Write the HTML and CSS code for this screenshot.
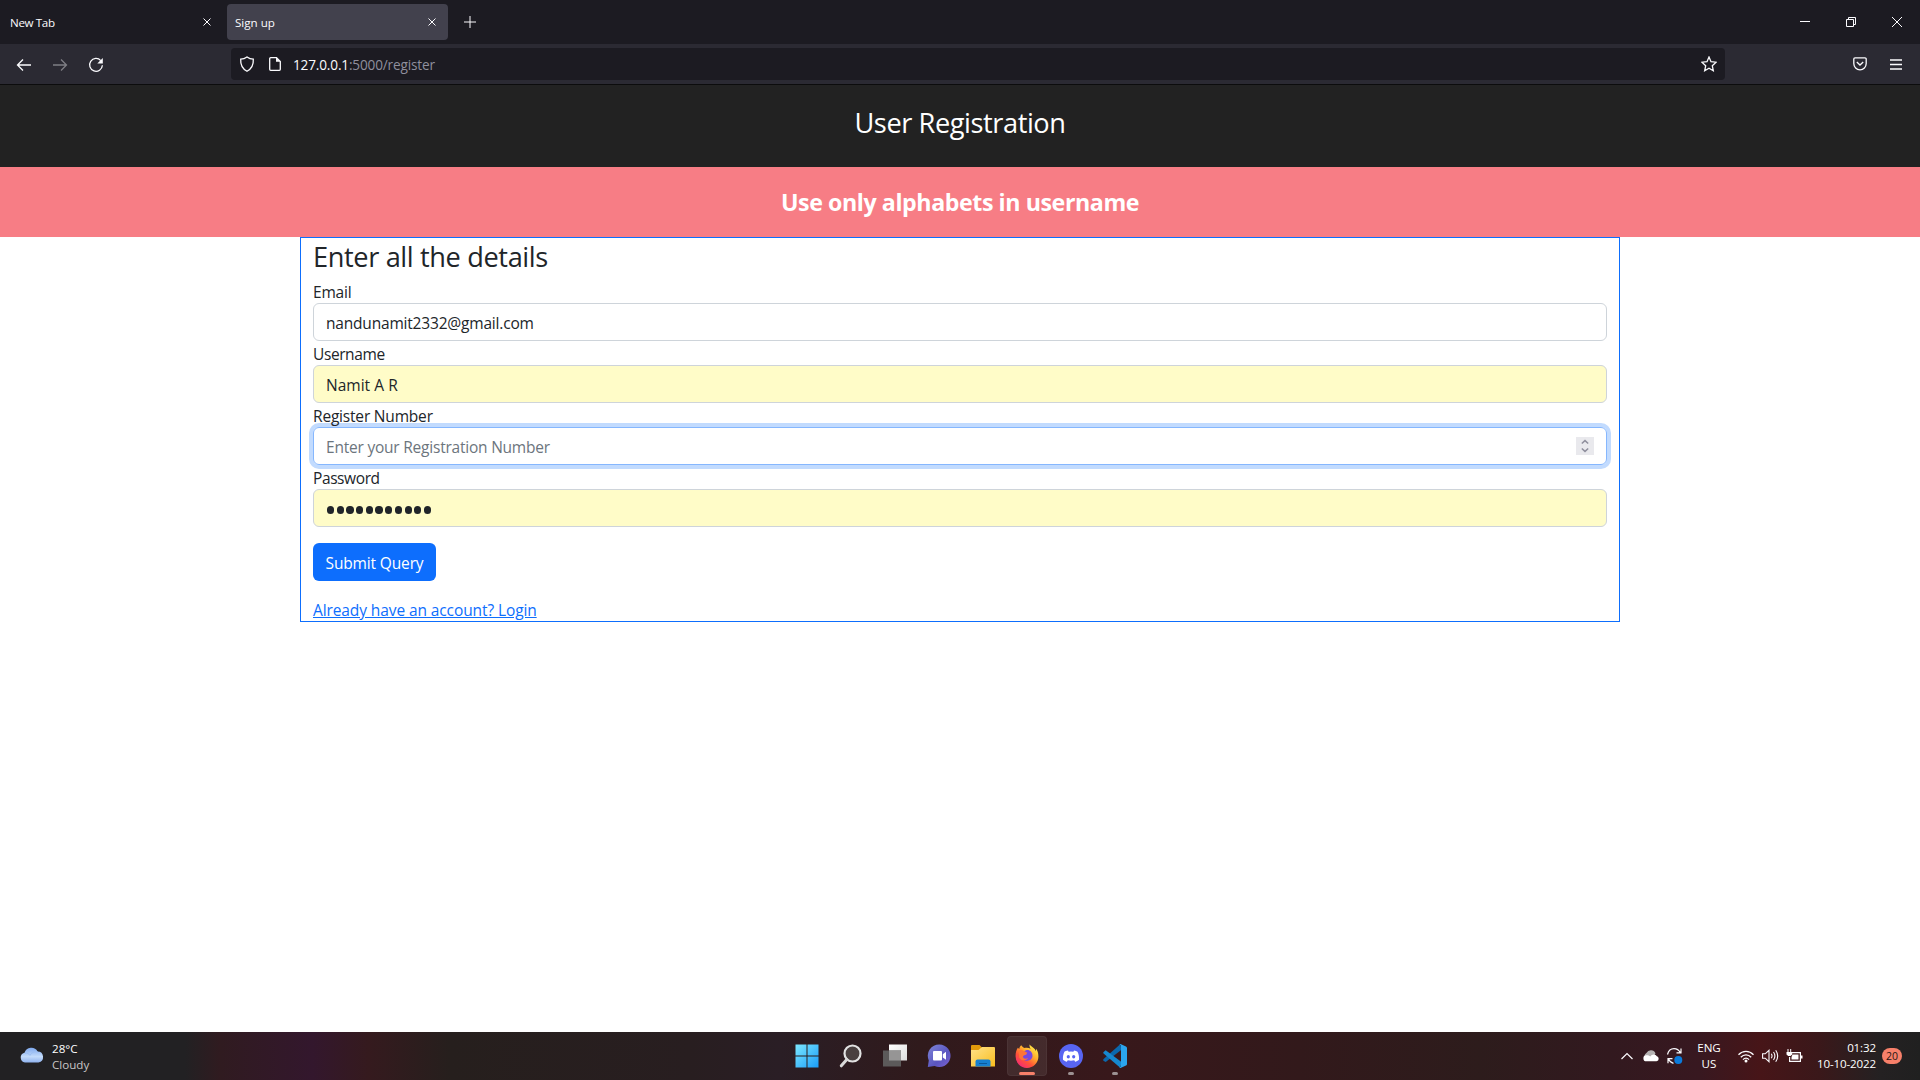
FILE: index.html
```html
<!DOCTYPE html>
<html lang="en">
<head>
<meta charset="utf-8">
<title>Sign up</title>
<link rel="stylesheet" href="styles.css">
</head>
<body>
<div class="desktop">
  <header class="tabbar">
    <div class="tab"><span class="tab-title tight">New Tab</span>
      <svg width="8" height="8" viewBox="0 0 8 8"><path d="M.5.5l7 7M7.5.5l-7 7"/></svg></div>
    <div class="tab tab-active"><span class="tab-title">Sign up</span>
      <svg width="8" height="8" viewBox="0 0 8 8"><path d="M.5.5l7 7M7.5.5l-7 7"/></svg></div>
    <svg class="newtab" width="12" height="12" viewBox="0 0 12 12"><path d="M6 0v12M0 6h12"/></svg>
    <div class="winbtns">
      <svg width="10" height="10" viewBox="0 0 10 10"><path d="M0 4.5h10"/></svg>
      <svg width="10" height="10" viewBox="0 0 10 10"><path d="M.5 2.5h7v7h-7zM2.500 2V.5h7v7H8"/></svg>
      <svg width="10" height="10" viewBox="0 0 10 10"><path d="M0 0l10 10M10 0L0 10"/></svg>
    </div>
  </header>
  <nav class="toolbar">
    <div class="navbtns">
      <svg width="16" height="16" viewBox="0 0 16 16"><path d="M15 8H2M7 2.500L1.500 8 7 13.500"/></svg>
      <svg class="off" width="16" height="16" viewBox="0 0 16 16"><path d="M1 8h13M9 2.500L14.500 8 9 13.500"/></svg>
      <svg width="16" height="16" viewBox="0 0 16 16"><path d="M12.800 3.600A6.400 6.400 0 1 0 14.400 8.300"/><path class="solid" d="M14.800 1v5.500H9.300z"/></svg>
    </div>
    <div class="urlbar">
      <svg width="16" height="16" viewBox="0 0 16 16"><path d="M8 .9c2 1.500 4.200 2.200 6.300 2.300.3 5-1.600 9.500-6.300 12C3.300 12.700 1.400 8.200 1.700 3.200 3.800 3.100 6 2.400 8 .9z"/></svg>
      <svg class="pageicon" width="14" height="16" viewBox="0 0 14 16"><path d="M2.700 1.700h5.800l3.800 3.800v7.800a1 1 0 0 1-1 1H2.700a1 1 0 0 1-1-1V2.700a1 1 0 0 1 1-1z"/><path class="solid" d="M8 1.500v4.300h4.300z"/></svg>
      <span class="url"><b>127.0.0.1</b>:5000/register</span>
      <svg class="star" width="16" height="16" viewBox="0 0 16 16"><path d="M8 1l2 4.700 5.100.5-3.800 3.500 1 5L8 12.200l-4.300 2.500 1-5L.9 6.200 6 5.700z"/></svg>
    </div>
    <svg class="pocket" width="14" height="14" viewBox="0 0 14 14"><path d="M2 .9h10a1.200 1.200 0 0 1 1.200 1.200v4.500a6.200 6.200 0 0 1-12.400 0V2.100A1.200 1.200 0 0 1 2 .9z"/><path d="M3.800 5L7 8l3.200-3"/></svg>
    <svg class="burger" width="12" height="11" viewBox="0 0 12 11"><path d="M0 1h12M0 5.500h12M0 10h12"/></svg>
  </nav>
  <main class="page">
    <h1 class="banner">User Registration</h1>
    <div class="alert">Use only alphabets in username</div>
    <form class="panel">
      <h2>Enter all the details</h2>
      <label>Email</label>
      <div class="field"><span>nandunamit2332@gmail.com</span></div>
      <label class="tight">Username</label>
      <div class="field filled"><span class="name">Namit A R</span></div>
      <label>Register Number</label>
      <div class="field focus"><span class="placeholder">Enter your Registration Number</span>
        <svg class="spin" width="18" height="18" viewBox="0 0 18 18"><path d="M5.800 6.500L9 3.600l3.200 2.900M5.800 11.500L9 14.400l3.200-2.900"/></svg></div>
      <label class="tight">Password</label>
      <div class="field filled dots"><i></i><i></i><i></i><i></i><i></i><i></i><i></i><i></i><i></i><i></i><i></i></div>
      <button class="submit" type="button">Submit Query</button>
      <a class="login" href="#">Already have an account? Login</a>
    </form>
  </main>
  <footer class="taskbar">
    <div class="weather">
      <svg width="24" height="16" viewBox="0 0 24 16">
        <defs><linearGradient id="cl" x1="0" y1="0" x2="0" y2="1"><stop offset="0" stop-color="#7fa9ee"/><stop offset=".6" stop-color="#c3dbfb"/><stop offset="1" stop-color="#8fb2ee"/></linearGradient></defs>
        <path fill="url(#cl)" stroke="none" d="M5 15.500A5 5 0 0 1 4.500 5.700 7.200 7.200 0 0 1 17.600 4.400 5.600 5.600 0 0 1 18.500 15.500z"/>
        <path d="M5 6.500c2-.6 4 .2 5 1.800 1.500-2.800 4-4 7.500-3.600" stroke="#9dbff3" stroke-width="1"/>
      </svg>
      <div class="lines"><span>28°C</span><span class="dim">Cloudy</span></div>
    </div>
    <div class="apps">
      <div class="app"><svg width="24" height="24" viewBox="0 0 24 24">
        <defs><linearGradient id="wn" x1="0" y1="0" x2="1" y2="1"><stop offset="0" stop-color="#7ce8ff"/><stop offset="1" stop-color="#1a9cf8"/></linearGradient></defs>
        <g stroke="none"><rect width="23" height="23" x=".5" y=".5" fill="url(#wn)"/><path d="M11.500 0h1v24h-1zM0 11.500h24v1H0z" fill="#2a1e1f"/></g></svg></div>
      <div class="app"><svg width="24" height="24" viewBox="0 0 24 24"><circle cx="13.500" cy="9.500" r="8" fill="#4a4040" stroke="#e2e2e2" stroke-width="2.200"/><path d="M7.800 15.500L2.300 21.800" stroke="#dadada" stroke-width="3" stroke-linecap="round"/></svg></div>
      <div class="app"><svg width="24" height="24" viewBox="0 0 24 24">
        <defs><linearGradient id="tv" x1="0" y1="0" x2="1" y2="1"><stop offset="0" stop-color="#fff"/><stop offset="1" stop-color="#dcdcdc"/></linearGradient></defs>
        <g stroke="none"><rect x="6" y=".5" width="18" height="16" fill="url(#tv)"/><rect x="0" y="6.500" width="18" height="16" fill="#5c5a5a"/><rect x="6" y="6.500" width="12" height="10" fill="#969595"/></g></svg></div>
      <div class="app"><svg width="24" height="24" viewBox="0 0 24 24">
        <defs><linearGradient id="ch" x1="0" y1="0" x2="1" y2="1"><stop offset="0" stop-color="#7f86d8"/><stop offset=".6" stop-color="#5a55c0"/><stop offset="1" stop-color="#7d62d0"/></linearGradient></defs>
        <g stroke="none"><path d="M12.500.5a11.300 11.300 0 1 1-4.900 21.600L.8 23l1-6.500A11.300 11.300 0 0 1 12.500.5z" fill="url(#ch)"/><rect x="6" y="7" width="9" height="9.500" rx="1" fill="#fff"/><path d="M15.800 10.200l3.200-2.400v8l-3.200-2.400z" fill="#fff"/></g></svg></div>
      <div class="app"><svg width="24" height="24" viewBox="0 0 24 24">
        <defs><linearGradient id="fo" x1="0" y1="0" x2="1" y2="1"><stop offset="0" stop-color="#ffe28a"/><stop offset="1" stop-color="#f9bd1e"/></linearGradient></defs>
        <g stroke="none"><path d="M1 1h7.500l2.500 2.500V9H0V2a1 1 0 0 1 1-1z" fill="#e19a0b"/><path d="M0 6h7.500L11 3h12a1 1 0 0 1 1 1v18.500H0z" fill="url(#fo)"/><path d="M4.500 22.500v-5a2 2 0 0 1 2-2h11a2 2 0 0 1 2 2v5z" fill="#1680d0"/><path d="M8 19h8v1H8z" fill="#0b5a9c"/></g></svg></div>
      <div class="app active"><svg width="24" height="24" viewBox="0 0 24 24">
        <defs><linearGradient id="ff" x1=".9" y1=".1" x2=".2" y2="1"><stop offset="0" stop-color="#fff04a"/><stop offset=".35" stop-color="#ffad2c"/><stop offset=".65" stop-color="#ff5437"/><stop offset="1" stop-color="#f2257c"/></linearGradient></defs>
        <g stroke="none"><path d="M14.600.5c-.3 1.700 0 3 1 4.200-1.700-1-4-1.400-6.100-.7C8 3.500 6.900 2.500 6.300 1.300 5 2.200 4.400 3.500 4.300 5L2.800 3.700C1.200 6.200.5 9 .6 12.300a11.400 11.400 0 0 0 22.800.5c.1-3.500-.8-6-2.300-8l-.2 2.400C20.200 4.300 16.800 3.300 14.600.5z" fill="url(#ff)"/><path d="M7.500 8.500c1.500-.3 2-1.800 3.500-2.300 3.500-1 6.400 1.600 6.500 5.300 0 3.300-2.400 5.300-5.300 5.200-3 0-5-2-4.900-4.500l4.600-2.300z" fill="#7748e0"/><path d="M3.800 6.500c2.700-1.500 5.200.4 8.500 2.300-1 2.300-3.600 1.600-4.300 3.700.2 2.400 2.800 2.700 5 1.500-1.500 3-6.700 3.200-8.800-.6z" fill="#ff7435"/></g></svg><i></i></div>
      <div class="app run"><svg width="24" height="24" viewBox="0 0 24 24"><g stroke="none"><circle cx="12" cy="12" r="12" fill="#5865f2"/><path fill="#fff" d="M9 6.500c-1.600.2-2.700.7-3.600 1.300C4.200 10.300 3.700 13 4 15.800c1.400 1.100 2.700 1.600 3.800 1.900l1-1.500c2.100.6 4.300.6 6.400 0l1 1.500c1.200-.3 2.500-.8 3.800-1.900.3-3-.3-5.600-1.500-8-.9-.6-2-1.100-3.500-1.300l-.6 1.200a11 11 0 0 0-4.800 0z"/><ellipse cx="9.300" cy="12.700" rx="1.600" ry="1.800" fill="#5865f2"/><ellipse cx="14.700" cy="12.700" rx="1.600" ry="1.800" fill="#5865f2"/></g></svg><i></i></div>
      <div class="app run"><svg width="24" height="24" viewBox="0 0 24 24"><g stroke="none"><path d="M.3 15.300L17.500 0l1 5.800L2.700 18l-2.400-1.300z" fill="#0b68ad"/><path d="M.3 8.300l2.400-2L18.500 18l-1 6L.3 9.200z" fill="#1688cf"/><path d="M17.500 0L23 2.500q1 .5 1 1.500v16q0 1-1 1.500L17.500 24q-.7 0-1.100-.7l1.600-.5V1.200L16.400.7z" fill="#2ba5ee"/></g></svg><i></i></div>
    </div>
    <div class="tray">
      <svg width="12" height="8" viewBox="0 0 12 8"><path d="M.5 7L6 1.500 11.500 7" stroke-width="1.200"/></svg>
      <svg class="cloud" width="17" height="12" viewBox="0 0 17 12"><g stroke="none"><path fill="#b5b2b2" d="M3 9A3.500 3.500 0 0 1 3.400 3 5 5 0 0 1 12.500 3.400L8 9z"/><path fill="#fff" d="M3.500 11.300a3 3 0 0 1-.2-6c1.700-.4 3 .3 4 1.200C8.500 4.200 12.300 3.500 13.500 6a2.700 2.700 0 0 1 0 5.300z"/></g></svg>
      <svg class="sync" width="17" height="18" viewBox="0 0 17 18"><path d="M1.500 7.500C2.500 3.500 5 1.600 8 1.600c3 0 5 1.500 6.300 4M15 1.500v4.400h-4.500M2 16.200v-4.500h4.500M2.500 12c1 2.200 2.800 3.800 5 4.300" stroke-width="1.200"/><circle cx="12.300" cy="13" r="4" fill="#0a7bdc" stroke="none"/></svg>
      <div class="lines lang"><span>ENG</span><span>US</span></div>
      <svg class="wifi" width="16" height="13" viewBox="0 0 16 13"><path d="M.5 4.800C4.700.3 11.300.3 15.500 4.800M2.800 7.300c3-3.200 7.400-3.200 10.400 0M5 9.600c1.800-1.900 4.200-1.900 6 0" stroke-width="1.300"/><circle cx="8" cy="11" r="1.500" fill="#fff" stroke="none"/></svg>
      <svg class="vol" width="17" height="14" viewBox="0 0 17 14"><path d="M.6 4.800h2.600L7 1.300v11.400L3.200 9.200H.6zM9.300 4.700q1.500 2.300 0 4.600M11.500 3q2.800 4 0 8M13.700 1.200q4 5.800 0 11.600" stroke-width="1.100"/></svg>
      <svg class="batt" width="17" height="14" viewBox="0 0 17 14"><path d="M6 3.600h8.400v8.800H3.600V8" stroke-width="1.200"/><path d="M6.500 5.500h6v5h-7V8zM15 6.500h1.500v3H15zM.5 3h5.700v2.500L4.500 7H2.200L.5 5.500z" fill="#fff" stroke="none"/><path d="M2 0v3M4.700 0v3"/></svg>
      <div class="lines clock"><span>01:32</span><span>10-10-2022</span></div>
      <div class="badge">20</div>
    </div>
  </footer>
</div>
</body>
</html>
```
FILE: styles.css
```css
* { box-sizing: border-box; }
body { margin: 0; font-family: "Open Sans", sans-serif; }
.desktop { width: 1920px; height: 1080px; display: flex; flex-direction: column; overflow: hidden; background: #fff; }
svg { fill: none; stroke: #fbfbfe; flex: none; }
.solid { fill: #fbfbfe; stroke: none; }

/* Browser chrome */
.tabbar { height: 44px; background: #1c1b22; display: flex; align-items: center; padding-left: 2px; gap: 4px; color: #fbfbfe; font-size: 11.6px; }
.tab { width: 221px; height: 36px; border-radius: 4px; padding: 0 12px 0 8px; display: flex; align-items: center; justify-content: space-between; }
.tab-title { padding-top: 1px; }
.tab-title.tight { letter-spacing: -.35px; }
.tab-active { background: #42414d; }
.newtab { margin-left: 12px; }
.winbtns { margin-left: auto; margin-right: 18px; display: flex; gap: 36px; }
.toolbar { height: 41px; background: #2b2a33; border-bottom: 1px solid #0c0c0d; display: flex; align-items: center; padding: 0 18px 0 16px; }
.toolbar svg { stroke-width: 1.3; }
.navbtns { width: 215px; display: flex; gap: 20px; padding-top: 1px; }
.off { opacity: .4; }
.urlbar { width: 1494px; height: 32px; background: #1c1b22; border-radius: 4px; display: flex; align-items: center; padding: 0 8px; font-size: 13.6px; letter-spacing: -.16px; color: #8f8f9d; }
.pageicon { margin: 0 11px 0 13px; }
.url { padding-top: 1px; }
.url b { font-weight: 400; color: #fbfbfe; }
.star { margin-left: auto; }
.pocket { margin-left: 128px; }
.burger { margin-left: auto; }

/* Registration page */
.page { flex: 1; color: #212529; }
.banner { margin: 0; height: 82px; background: #222; color: #fff; font-size: 27.2px; letter-spacing: -.43px; font-weight: 400; text-align: center; line-height: 76px; }
.alert { height: 70px; background: #f77d85; color: #fff; font-size: 23.2px; letter-spacing: -.42px; font-weight: 700; text-align: center; line-height: 70px; }
.panel { width: 1320px; height: 385px; margin: 0 auto; border: 1px solid #0d6efd; padding: 0 12px; display: flex; flex-direction: column; font-size: 15.5px; letter-spacing: -.19px; }
.panel h2 { margin: 0 0 5px; padding-top: 2px; font-size: 27.2px; letter-spacing: -.38px; line-height: 34px; font-weight: 400; }
.panel label { height: 24px; padding-top: 2px; line-height: 22px; z-index: 1; }
.panel label.tight { letter-spacing: -.4px; }
.field { height: 38px; flex: none; border: 1px solid #ced4da; border-radius: 6px; padding: 0 12px; display: flex; align-items: center; }
.field span { padding-top: 2px; }
.field .name { letter-spacing: 0; word-spacing: .2px; }
.filled { background: #fffcc8; }
.focus { border-color: #86b7fe; box-shadow: 0 0 0 4px #c2dbfe; justify-content: space-between; }
.focus .placeholder { color: #6c757d; letter-spacing: -.22px; }
.spin { background: #e9e9ed; stroke: #8f8f9d; stroke-width: 1.5; }
.dots { gap: 2.4px; padding: 4px 0 0 13px; }
.dots i { width: 7.3px; height: 7.3px; border-radius: 50%; background: #212529; }
.submit { width: 123px; height: 38px; margin: 16px 0; padding: 2px 0 0; background: #0d6efd; color: #fff; border: 0; border-radius: 6px; font: 15.5px "Open Sans", sans-serif; letter-spacing: -.15px; }
.login { color: #0d6efd; height: 24px; padding-top: 2px; line-height: 22px; letter-spacing: -.1px; }

/* Taskbar */
.taskbar { height: 48px; display: flex; color: #fff; font-size: 11.6px;
  background: linear-gradient(90deg, #222123 0, #222123 185px, #301b20 220px, #33172d 312px, #351a1e 368px, #261f1d 450px, #281e20 690px, #2a1e25 780px, #301a1c 920px, #38181b 1110px, #32191b 1300px, #2d1c1c 1480px, #32191f 1610px, #381820 1700px, #471518 1760px, #3a181a 1820px, #242122 1880px, #202020 1920px); }
.weather { width: 785px; padding: 15px 0 0 20px; display: flex; gap: 8px; }
.weather .lines { margin-top: -6px; }
.lines { display: flex; flex-direction: column; line-height: 16px; }
.dim { color: #c9c6c7; }
.apps { width: 352px; display: flex; }
.app { width: 40px; height: 40px; margin: 4px 2px; border-radius: 4px; display: flex; flex-direction: column; align-items: center; padding-top: 8px; }
.app i { margin-top: 4px; height: 3px; border-radius: 2px; }
.active { background: #ffffff14; box-shadow: inset 0 0 0 1px #ffffff0c; }
.active i { width: 16px; background: #f7806a; }
.run i { width: 6px; background: #9c9192; }
.tray { width: 783px; padding-left: 484px; display: flex; align-items: center; }
.cloud { margin: 0 6px 0 10px; }
.sync { margin-right: 12px; }
.lang { width: 28px; text-align: center; }
.wifi { margin: 0 8px 0 15px; }
.batt { margin-left: 7px; }
.clock { width: 73px; text-align: right; letter-spacing: -.14px; }
.badge { width: 20px; height: 16px; margin-left: 6px; border-radius: 8px; background: #f7806a; color: #2a1512; font-size: 10.5px; line-height: 16px; text-align: center; }
```
